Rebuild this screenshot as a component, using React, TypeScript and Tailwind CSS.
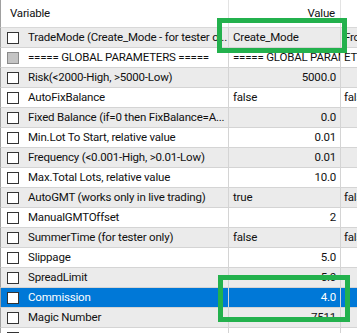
import React from "react";

interface Row {
    name: string;
    value: string;
    align: "left" | "right";
    extra?: string;
    disabled?: boolean;
    selected?: boolean;
}

const rows: Row[] = [
    {name: "TradeMode (Create_Mode - for tester o...", value: "Create_Mode", align: "left", extra: "Fro"},
    {name: "===== GLOBAL PARAMETERS =====", value: "===== GLOBAL PARAMETERS", align: "left", extra: "ET", disabled: true},
    {name: "Risk(<2000-High, >5000-Low)", value: "5000.0", align: "right"},
    {name: "AutoFixBalance", value: "false", align: "left", extra: "false"},
    {name: "Fixed Balance (if=0 then FixBalance=A...", value: "0.0", align: "right"},
    {name: "Min.Lot To Start, relative value", value: "0.01", align: "right"},
    {name: "Frequency (<0.001-High, >0.01-Low)", value: "0.01", align: "right"},
    {name: "Max.Total Lots, relative value", value: "10.0", align: "right"},
    {name: "AutoGMT (works only in live trading)", value: "true", align: "left", extra: "false"},
    {name: "ManualGMTOffset", value: "2", align: "right"},
    {name: "SummerTime (for tester only)", value: "false", align: "left", extra: "false"},
    {name: "Slippage", value: "5.0", align: "right"},
    {name: "SpreadLimit", value: "5.0", align: "right"},
    {name: "Commission", value: "4.0", align: "right", selected: true},
    {name: "Magic Number", value: "7511", align: "right"},
    {name: "", value: "", align: "right"},
];

const App = () => {
    return (
        <div className="relative w-[357px] h-[333px] overflow-hidden bg-white text-[11.5px] tracking-[-0.2px] text-[#111]"
             style={{fontFamily: 'Roboto, "Liberation Sans", Arial, sans-serif'}}>
            {/* header */}
            <div className="flex h-[28px] border-b border-[#d8d8d8] border-l border-l-[#a0a0a0]">
                <div className="w-[228px] shrink-0 flex items-center pl-[9px] border-r border-[#e3e3e3]">Variable</div>
                <div className="w-[112px] shrink-0 flex items-center justify-end pr-[5px] border-r border-[#e3e3e3]">Value</div>
                <div className="flex-1"/>
            </div>

            {/* rows */}
            {rows.map((row, i) => {
                const bg = row.selected ? "bg-[#0078d7] text-white" : i % 2 === 0 ? "bg-[#ebebeb]" : "bg-white";
                return (
                    <div key={i} className={`flex h-[20px] shrink-0 border-b border-[#d4d4d4] border-l border-l-[#a0a0a0] ${bg}`}>
                        <div className="w-[228px] shrink-0 flex items-center border-r border-[#d4d4d4] overflow-hidden whitespace-nowrap">
                            <div className={`ml-[6px] mr-[9px] w-[12px] h-[12px] shrink-0 border ${row.disabled ? "bg-[#c4c4c4] border-[#8a8a8a]" : "bg-white border-[#333333]"}`}/>
                            <span>{row.name}</span>
                        </div>
                        <div className={`w-[112px] shrink-0 flex items-center overflow-hidden whitespace-nowrap border-r border-[#d4d4d4] ${row.align === "right" ? "justify-end pr-[4px]" : "pl-[4px]"}`}>
                            {row.value}
                        </div>
                        <div className="flex-1 flex items-center pl-[3px] overflow-hidden whitespace-nowrap">
                            {row.extra}
                        </div>
                    </div>
                );
            })}

            {/* highlight boxes */}
            <div className="absolute left-[217px] top-[18px] w-[130px] h-[35px] border-[5px] border-[#23b14d]"/>
            <div className="absolute left-[218px] top-[275px] w-[132px] h-[47px] border-[5px] border-[#23b14d]"/>
        </div>
    );
};

export default App;
